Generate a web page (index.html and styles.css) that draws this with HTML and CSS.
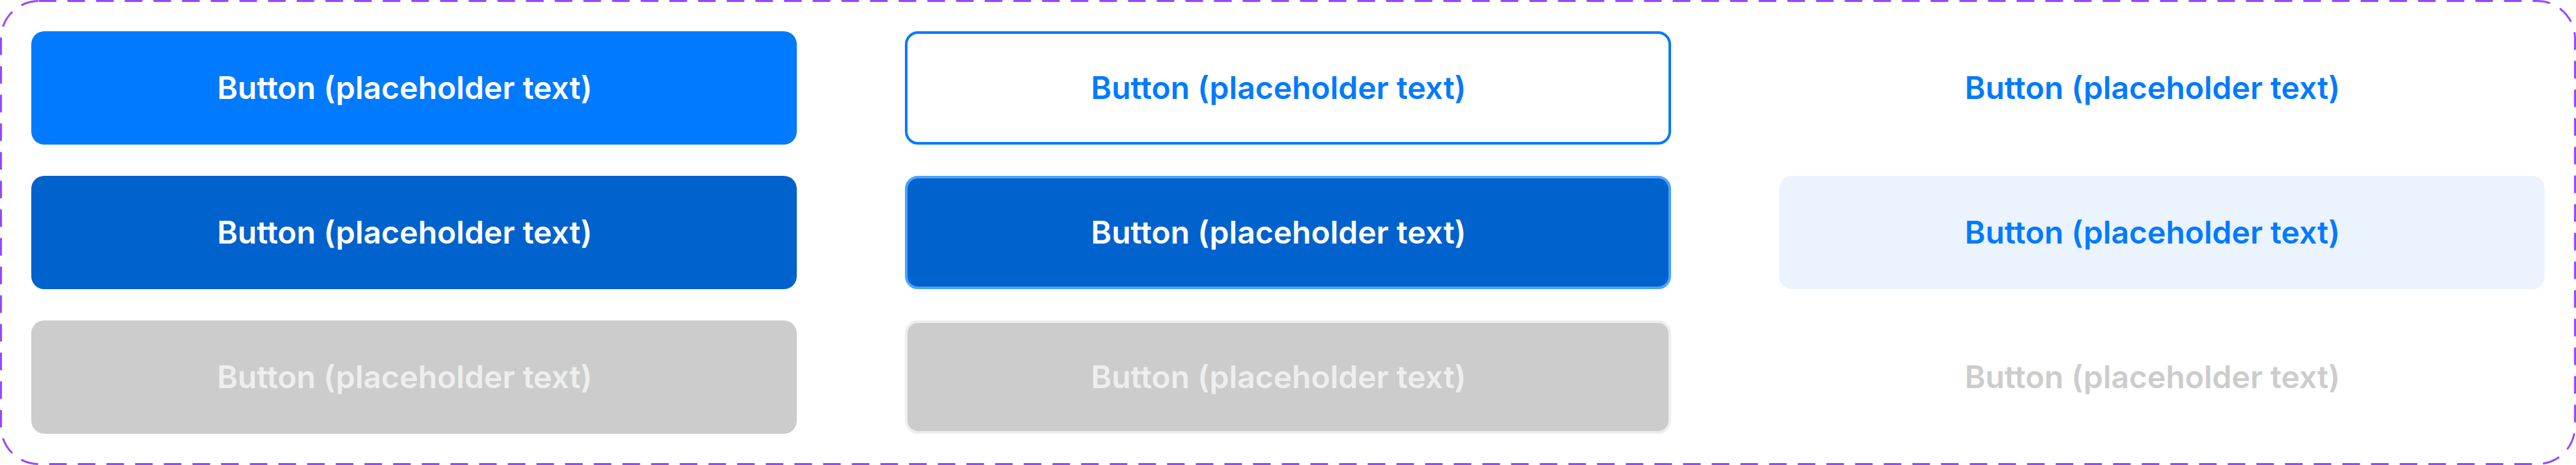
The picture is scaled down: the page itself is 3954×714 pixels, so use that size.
FILE: index.html
```html
<!DOCTYPE html>
<html lang="en">
<head>
  <meta charset="UTF-8">
  <meta name="viewport" content="width=device-width, initial-scale=1.0">
  <title>Button variants</title>
  <link rel="stylesheet" href="styles.css">
</head>
<body>
  <div class="variant-set">
    <!-- dashed frame around the whole set -->
    <svg class="set-frame" viewBox="0 0 3954 714" preserveAspectRatio="none" aria-hidden="true">
      <rect x="1.5" y="1.5" width="3951" height="711" rx="58" ry="58" />
    </svg>

    <button class="btn btn-primary">Button (placeholder text)</button>
    <button class="btn btn-secondary">Button (placeholder text)</button>
    <button class="btn btn-tertiary">Button (placeholder text)</button>

    <button class="btn btn-primary pressed">Button (placeholder text)</button>
    <button class="btn btn-secondary pressed">Button (placeholder text)</button>
    <button class="btn btn-tertiary pressed">Button (placeholder text)</button>

    <button class="btn btn-primary disabled">Button (placeholder text)</button>
    <button class="btn btn-secondary disabled">Button (placeholder text)</button>
    <button class="btn btn-tertiary disabled">Button (placeholder text)</button>
  </div>
</body>
</html>
```

FILE: styles.css
```css
body {
  margin: 0;
  font-family: 'Inter', 'Noto Sans', Arial, sans-serif;
  background: #ffffff;
}

.variant-set {
  position: relative;
  box-sizing: border-box;
  width: 3954px;
  height: 714px;
  padding: 48px;
  display: grid;
  grid-template-columns: repeat(3, 1fr);
  grid-auto-rows: 174px;
  column-gap: 166px;
  row-gap: 48px;
}

.set-frame {
  position: absolute;
  inset: 0;
  width: 100%;
  height: 100%;
  pointer-events: none;
}

.set-frame rect {
  fill: none;
  stroke: #9747ff;
  stroke-width: 3;
  stroke-dasharray: 27 17;
}

.btn {
  box-sizing: border-box;
  display: flex;
  align-items: center;
  justify-content: center;
  margin: 0;
  padding: 0 53px 0 24px;
  border: 4px solid transparent;
  border-radius: 20px;
  font-family: inherit;
  font-size: 48px;
  font-weight: 600;
  line-height: 1;
  cursor: pointer;
}

/* primary */
.btn-primary {
  background: #007aff;
  color: #ffffff;
}

.btn-primary.pressed {
  background: #0062cc;
}

.btn-primary.disabled {
  background: #cccccc;
  color: #eeeeee;
}

/* secondary / outline */
.btn-secondary {
  background: #ffffff;
  border-color: #007aff;
  color: #007aff;
}

.btn-secondary.pressed {
  background: #0062cc;
  border-color: #4da2ff;
  color: #ffffff;
}

.btn-secondary.disabled {
  background: #cccccc;
  border-color: #eeeeee;
  color: #eeeeee;
}

/* tertiary / text only */
.btn-tertiary {
  background: transparent;
  color: #007aff;
}

.btn-tertiary.pressed {
  background: #ebf3ff;
}

.btn-tertiary.disabled {
  color: #cccccc;
}
```
